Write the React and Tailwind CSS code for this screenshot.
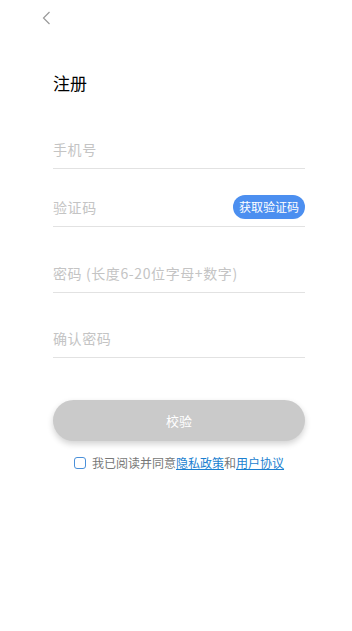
import React, { useState } from 'react';

const font = { fontFamily: '"Noto Sans CJK SC", "Noto Sans", sans-serif' };

function Field({ placeholder, type = 'text', className = '', children }) {
  return (
    <div className={`flex h-[38px] items-center border-b border-[#e2e2e2] ${className}`}>
      <input
        type={type}
        placeholder={placeholder}
        className="min-w-0 flex-1 bg-transparent text-[14px] tracking-[0.6px] text-[#333] outline-none placeholder:text-[#c4c4c4]"
      />
      {children}
    </div>
  );
}

export default function App() {
  const [agree, setAgree] = useState(false);

  return (
    <div className="min-h-[631px] w-full bg-white" style={font}>
      {/* back */}
      <div className="h-[34px] pl-[42px] pt-[11px]">
        <svg width="9" height="14" viewBox="0 0 9 14" fill="none">
          <polyline points="7.5,1 1.5,7 7.5,13" stroke="#9a9a9a" strokeWidth="1.2" />
        </svg>
      </div>

      <div className="ml-[53px] mr-[47px]">
        <h1 className="mt-[37px] h-[24px] text-[17px] leading-[24px] text-black">注册</h1>

        <Field placeholder="手机号" className="mt-[36px]" />
        <Field placeholder="验证码" className="mt-[20px]">
          <button className="mb-[1px] h-[24px] w-[72px] shrink-0 rounded-full bg-[#4c8ff0] text-[12px] text-white">
            获取验证码
          </button>
        </Field>
        <Field placeholder="密码 (长度6-20位字母+数字)" type="password" className="mt-[28px]" />
        <Field placeholder="确认密码" type="password" className="mt-[27px]" />

        <button className="mt-[42px] h-[41px] w-full rounded-full bg-[#cacaca] text-[13px] text-white shadow-[0_3px_6px_rgba(0,0,0,0.18)]">
          校验
        </button>

        <div className="mt-[14px] flex h-[16px] items-center justify-center text-[12px] leading-none">
          <button
            onClick={() => setAgree(!agree)}
            className={`mr-[6px] h-[12px] w-[12px] rounded-[3px] border border-[#4a90d9] ${agree ? 'bg-[#4a90d9]' : 'bg-white'}`}
          />
          <span className="text-[#777]">我已阅读并同意</span>
          <a className="text-[#1b7fd0] underline">隐私政策</a>
          <span className="text-[#777]">和</span>
          <a className="text-[#1b7fd0] underline">用户协议</a>
        </div>
      </div>
    </div>
  );
}
